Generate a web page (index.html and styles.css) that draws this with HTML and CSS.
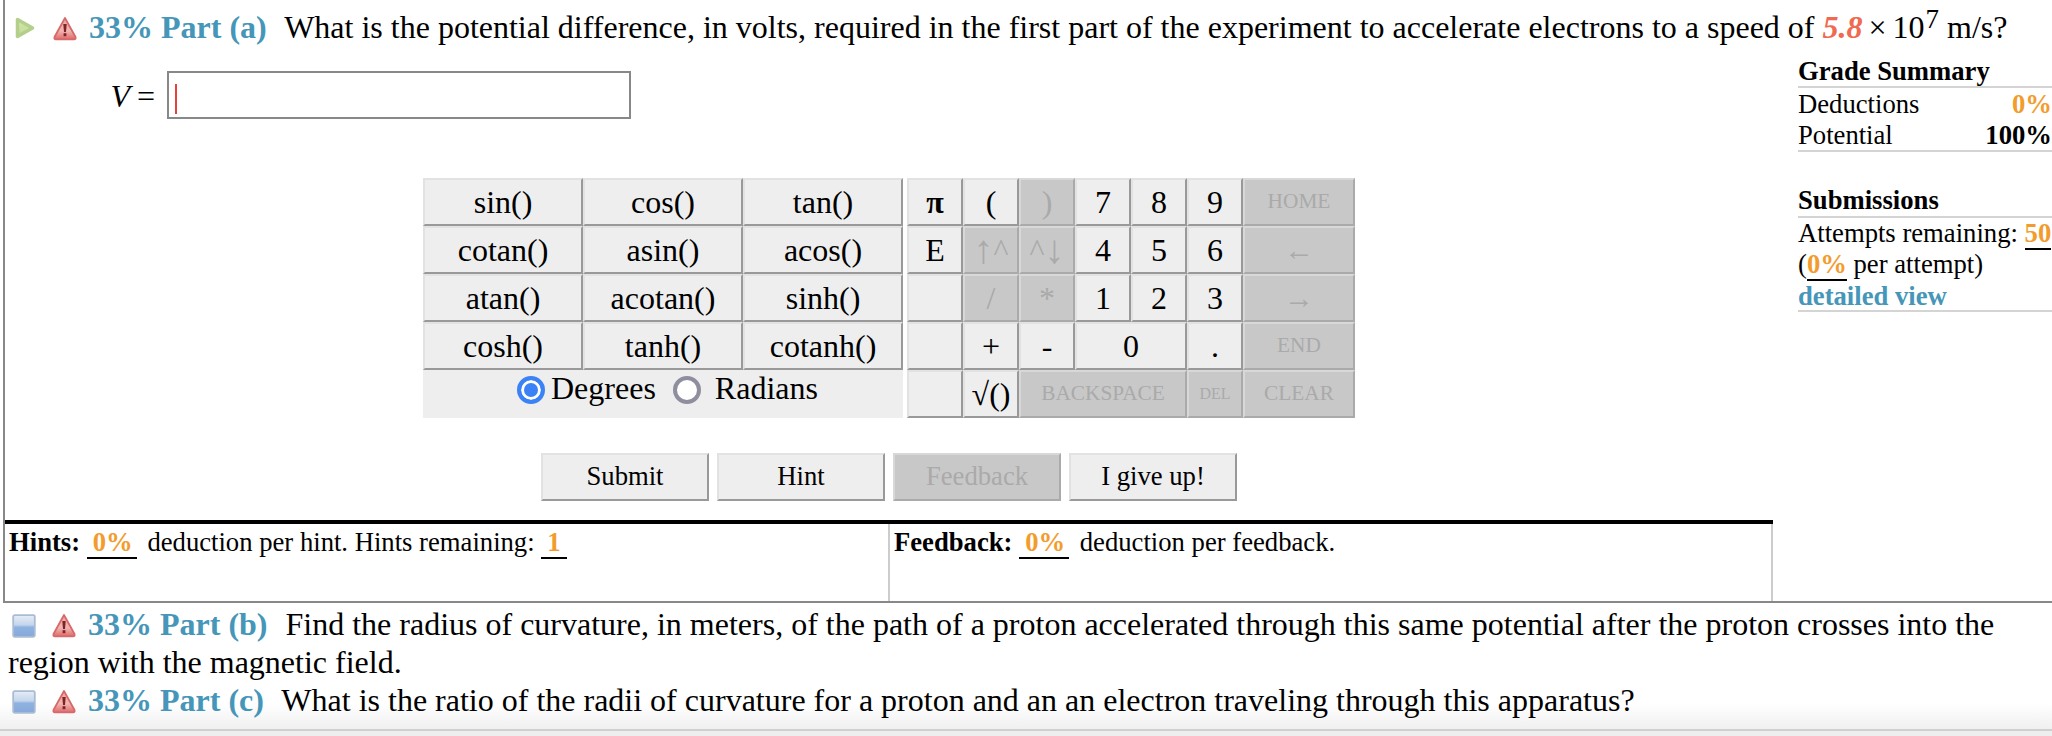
FILE: index.html
```html
<!DOCTYPE html>
<html lang="en">
<head>
<meta charset="utf-8">
<title>Part (a)</title>
<link rel="stylesheet" href="styles.css">
</head>
<body>
<svg class="defs" width="0" height="0" aria-hidden="true">
  <defs>
    <linearGradient id="gGreen" x1="0" y1="0" x2="0" y2="1"><stop offset="0" stop-color="#dcebb8"/><stop offset="1" stop-color="#b9d78c"/></linearGradient>
    <linearGradient id="gRed" x1="0" y1="0" x2="0" y2="1"><stop offset="0" stop-color="#eda4a2"/><stop offset=".6" stop-color="#f0b6b2"/><stop offset="1" stop-color="#e0696a"/></linearGradient>
    <linearGradient id="gBlue" x1="0" y1="0" x2="0" y2="1"><stop offset="0" stop-color="#e6edf6"/><stop offset=".45" stop-color="#c4d6ec"/><stop offset=".55" stop-color="#8fb2e0"/><stop offset="1" stop-color="#86a9da"/></linearGradient>
    <symbol id="warn" viewBox="0 0 24 24">
      <path d="M12 1.500 L22.500 20.500 Q23.200 22.800 21 22.800 H3 Q0.800 22.800 1.500 20.500 Z" fill="url(#gRed)" stroke="#d8696a" stroke-width="1.800" stroke-linejoin="round"/>
      <path d="M10.300 7.500 H13.700 L13 15.500 H11 Z" fill="#7d2426"/>
      <rect x="10.600" y="16.700" width="2.800" height="3" fill="#7d2426"/>
    </symbol>
    <symbol id="play" viewBox="0 0 20 22">
      <path d="M2.500 2.500 L17.500 11 L2.500 19.500 Z" fill="url(#gGreen)" stroke="#b4cf8c" stroke-width="3.500" stroke-linejoin="round"/>
      <path d="M6 7 L13 11 L6 15 Z" fill="#c9e09e"/>
    </symbol>
    <symbol id="box" viewBox="0 0 24 24">
      <rect x="1.200" y="1.200" width="21.600" height="21.600" rx="1.500" fill="url(#gBlue)" stroke="#a9bcd4" stroke-width="1.800"/>
    </symbol>
  </defs>
</svg>
<div class="page">
  <section class="part-a">
    <h2 class="part-line first">
      <svg class="ico-left play"><use href="#play"/></svg>
      <svg class="ico-warn"><use href="#warn"/></svg>
      <span class="part-label">33% Part (a)</span>
      What is the potential difference, in volts, required in the first part of the experiment to accelerate electrons to a speed of <b class="given">5.8</b><span class="tight"> × </span>10<sup>7</sup> m/s?
    </h2>
    <div class="work">
      <div class="work-main">
        <div class="answer">
          <span class="var"><i>V</i> =</span>
          <div class="input"><span class="caret"></span></div>
        </div>
        <div class="keypad">
          <div class="funcs">
            <div class="key">sin()</div><div class="key">cos()</div><div class="key">tan()</div>
            <div class="key">cotan()</div><div class="key">asin()</div><div class="key">acos()</div>
            <div class="key">atan()</div><div class="key">acotan()</div><div class="key">sinh()</div>
            <div class="key">cosh()</div><div class="key">tanh()</div><div class="key">cotanh()</div>
            <div class="angles">
              <span class="radio on"></span><span class="angle-a">Degrees</span>
              <span class="radio"></span><span class="angle-b">Radians</span>
            </div>
          </div>
          <div class="nums">
            <div class="key pi">π</div><div class="key">(</div><div class="key off">)</div><div class="key">7</div><div class="key">8</div><div class="key">9</div><div class="key off word">HOME</div>
            <div class="key">E</div><div class="key off"><span class="arrow">↑</span>^</div><div class="key off">^<span class="arrow">↓</span></div><div class="key">4</div><div class="key">5</div><div class="key">6</div><div class="key off side-arrow">←</div>
            <div class="key"></div><div class="key off">/</div><div class="key off">*</div><div class="key">1</div><div class="key">2</div><div class="key">3</div><div class="key off side-arrow">→</div>
            <div class="key"></div><div class="key">+</div><div class="key">-</div><div class="key span2">0</div><div class="key">.</div><div class="key off word">END</div>
            <div class="key"></div><div class="key">√()</div><div class="key off word span3">BACKSPACE</div><div class="key off del">DEL</div><div class="key off word">CLEAR</div>
          </div>
        </div>
        <div class="actions">
          <div class="key btn">Submit</div>
          <div class="key btn">Hint</div>
          <div class="key btn off">Feedback</div>
          <div class="key btn">I give up!</div>
        </div>
        <div class="notes">
          <div class="note"><b>Hints:</b> <span class="val wide">0%</span> deduction per hint. Hints remaining: <span class="val">1</span></div>
          <div class="note last"><b>Feedback:</b> <span class="val wide">0%</span> deduction per feedback.</div>
        </div>
      </div>
      <aside class="side">
        <div class="side-title">Grade Summary</div>
        <div class="side-row first-row"><span>Deductions</span><b class="orange">0%</b></div>
        <div class="side-row ruled"><span>Potential</span><b>100%</b></div>
        <div class="side-title second">Submissions</div>
        <div class="side-line">Attempts remaining: <b class="val">50</b></div>
        <div class="side-line">(<b class="val">0%</b> per attempt)</div>
        <div class="side-line ruled link">detailed view</div>
      </aside>
    </div>
  </section>
  <section class="parts">
    <h2 class="part-line">
      <svg class="ico-left"><use href="#box"/></svg>
      <svg class="ico-warn"><use href="#warn"/></svg>
      <span class="part-label">33% Part (b)</span>
      Find the radius of curvature, in meters, of the path of a proton accelerated through this same potential after the proton crosses into the region with the magnetic field.
    </h2>
    <h2 class="part-line">
      <svg class="ico-left"><use href="#box"/></svg>
      <svg class="ico-warn"><use href="#warn"/></svg>
      <span class="part-label">33% Part (c)</span>
      What is the ratio of the radii of curvature for a proton and an an electron traveling through this apparatus?
    </h2>
  </section>
  <div class="foot"></div>
</div>
</body>
</html>
```

FILE: styles.css
```css
* { box-sizing: border-box; }
html, body { margin: 0; padding: 0; background: #fff; }
body {
  font-family: "Liberation Serif", "Times New Roman", serif;
  color: #000;
  width: 2052px;
  height: 736px;
  overflow: hidden;
}
.defs { position: absolute; }
.page { display: flex; flex-direction: column; height: 736px; }

.part-a {
  margin-left: 3px;
  height: 603px;
  border-left: 2px solid #888;
  border-bottom: 2px solid #888;
  display: flex;
  flex-direction: column;
}
.part-line {
  margin: 0;
  font-size: 32px;
  font-weight: 400;
  line-height: 38px;
  padding-left: 8px;
}
.part-line.first { padding: 8px 0 0 10px; height: 58px; white-space: nowrap; }
.ico-left { width: 24px; height: 24px; vertical-align: -3px; margin-left: 4px; margin-right: 8px; filter: blur(.4px); }
.play { width: 20px; height: 22px; margin-left: 0; margin-right: 10px; vertical-align: -1px; }
.ico-warn { width: 24px; height: 25px; vertical-align: -3px; margin-right: 4px; filter: blur(.3px); }
.part-label { font-weight: 700; color: #4596b8; margin-right: 10px; }
.given { color: #ef6a50; font-style: italic; }
.tight { word-spacing: -2px; }
sup { font-size: 27px; line-height: 0; vertical-align: 10px; margin-left: 1px; }

.work { display: flex; flex: 1; min-height: 0; }
.work-main { width: 1768px; display: flex; flex-direction: column; }

.answer { display: flex; align-items: center; height: 48px; margin-top: 13px; padding-left: 98px; }
.var { width: 52px; font-size: 32px; margin-right: 12px; padding-top: 3px; text-align: right; white-space: nowrap; word-spacing: -1px; }
.input { width: 464px; height: 48px; border: 2px solid #888; background: #fff; padding: 11px 0 0 6px; }
.caret { display: block; width: 2px; height: 30px; background: #e8403a; }

.keypad { display: flex; justify-content: center; gap: 4px; margin-top: 59px; font-size: 32px; }
.funcs { display: grid; grid-template-columns: repeat(3, 160px); grid-auto-rows: 48px; }
.nums { display: grid; grid-template-columns: repeat(6, 56px) 112px; grid-auto-rows: 48px; }
.key {
  display: flex;
  align-items: center;
  justify-content: center;
  background: #eee;
  border: 2px solid;
  border-color: #e2e2e2 #999 #999 #e2e2e2;
  white-space: nowrap;
}
.key.off { background: #c8c8c8; color: #aaa; border-color: #d8d8d8 #aaa #aaa #d8d8d8; }
.key.word { font-size: 21.33px; padding-bottom: 2px; }
.key.side-arrow { font-size: 30px; }
.key.del { font-size: 16px; }
.arrow { font-size: 40px; line-height: 1; }
.pi { font-weight: 700; }
.span2 { grid-column: span 2; }
.span3 { grid-column: span 3; }
.angles { grid-column: span 3; background: #eee; display: flex; align-items: center; padding: 0 0 8px 94px; }
.radio { width: 28px; height: 28px; border-radius: 50%; border: 4px solid #8e8e9e; background: #fff; flex: none; }
.radio.on { border-color: #3b82f6; box-shadow: inset 0 0 0 3px #fff; background: #3b82f6; }
.angle-a { margin-left: 6px; margin-right: 17px; padding-bottom: 4px; }
.angle-b { margin-left: 14px; padding-bottom: 4px; }

.actions { display: flex; justify-content: center; gap: 8px; margin-top: 35px; font-size: 26.67px; }
.btn { width: 168px; height: 48px; padding-bottom: 2px; }

.notes { display: flex; margin-top: 19px; border-top: 4px solid #000; flex: 1; font-size: 26.67px; }
.note { width: 883px; padding: 3px 0 0 4px; line-height: 31px; }
.note.last { width: 885px; border-left: 2px solid #ccc; border-right: 2px solid #ccc; padding-left: 4px; }
.val { color: #f39c2e; font-weight: 700; border-bottom: 2px solid #000; padding: 0 6px; }
.side .val { padding: 0; }
.wide { padding: 0 4px 0 6px; margin-right: 4px; }

.side { margin-left: 25px; width: 254px; font-size: 26.67px; line-height: 31px; }
.side-title { font-weight: 700; height: 30px; line-height: 26px; border-bottom: 2px solid #d4d4d4; }
.side-title.second { margin-top: 36px; line-height: 24px; }
.side-row { display: flex; justify-content: space-between; }
.first-row { margin-top: 1px; }
.side-row.ruled { height: 32px; }
.orange { color: #f39c2e; }
.ruled { border-bottom: 2px solid #d4d4d4; }
.side-line { white-space: nowrap; }
.link { color: #4596b8; font-weight: 700; height: 32px; line-height: 32px; }

.parts {
  flex: 1;
  padding-top: 2px;
  background: linear-gradient(#fff 0, #fff 80%, #f0f0f0 100%);
}
.foot { height: 7px; flex: none; background: #eee; border-top: 2px solid #d0d0d0; }
```
